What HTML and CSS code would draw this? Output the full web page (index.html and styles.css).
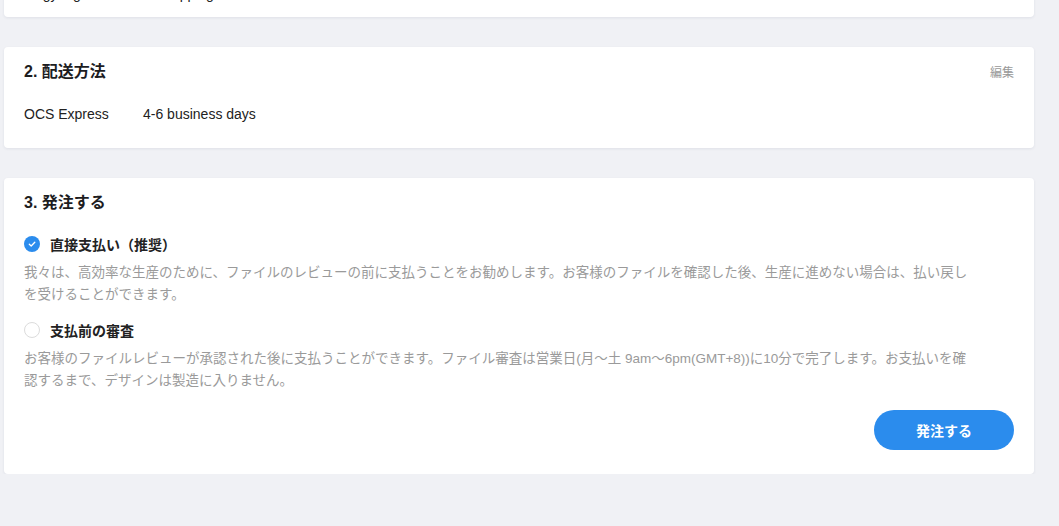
FILE: index.html
```html
<!DOCTYPE html>
<html lang="ja">
<head>
<meta charset="utf-8">
<title>発注</title>
<link rel="stylesheet" href="styles.css">
</head>
<body>
<div class="page">
  <section class="card card-prev">
    <div class="prev-line">Lingyang Zhou&nbsp;&nbsp;&nbsp;&nbsp;&nbsp;&nbsp;&nbsp;&nbsp;&nbsp;&nbsp;&nbsp;Shipping</div>
  </section>

  <section class="card">
    <header class="card-head">
      <h2 class="card-title">2. 配送方法</h2>
      <a class="edit-link">編集</a>
    </header>
    <div class="ship-row">
      <span class="ship-name">OCS Express</span>
      <span class="ship-time">4-6 business days</span>
    </div>
  </section>

  <section class="card">
    <header class="card-head">
      <h2 class="card-title">3. 発注する</h2>
    </header>
    <div class="options">
      <div class="option">
        <div class="option-label">
          <span class="radio radio-on">
            <svg viewBox="0 0 16 16" width="16" height="16"><circle cx="8" cy="8" r="8" fill="#2b8ced"/><path d="M5.3 8.2 L7.2 10 L10.8 6.3" fill="none" stroke="#fff" stroke-width="1.3" stroke-linecap="round" stroke-linejoin="round"/></svg>
          </span>
          <span class="option-name">直接支払い（推奨）</span>
        </div>
        <p class="option-desc">我々は、高効率な生産のために、ファイルのレビューの前に支払うことをお勧めします。お客様のファイルを確認した後、生産に進めない場合は、払い戻しを受けることができます。</p>
      </div>
      <div class="option">
        <div class="option-label">
          <span class="radio radio-off"></span>
          <span class="option-name">支払前の審査</span>
        </div>
        <p class="option-desc">お客様のファイルレビューが承認された後に支払うことができます。ファイル審査は営業日(月〜土 9am〜6pm(GMT+8))に10分で完了します。お支払いを確認するまで、デザインは製造に入りません。</p>
      </div>
    </div>
    <div class="actions">
      <button class="btn-primary" type="button">発注する</button>
    </div>
  </section>
</div>
</body>
</html>
```

FILE: styles.css
```css
* { box-sizing: border-box; }

html, body {
  margin: 0;
  padding: 0;
  background: #f0f1f5;
  overflow: hidden;
}

body {
  font-family: "Liberation Sans", "Noto Sans CJK JP", Arial, sans-serif;
  color: #222;
  font-size: 14px;
}

.page {
  width: 1030px;
  margin-left: 4px;
  display: flex;
  flex-direction: column;
  gap: 30px;
}

.card {
  background: #fff;
  border-radius: 4px;
  box-shadow: 0 1px 3px rgba(30, 40, 80, 0.08);
  padding: 0 20px 24px;
}

.card-prev {
  margin-top: -16px;
  padding: 0 20px 13px;
}

.prev-line {
  line-height: 20px;
  color: #222;
}

.card-head {
  height: 48px;
  display: flex;
  align-items: center;
  justify-content: space-between;
  padding-top: 1px;
}

.card-title {
  margin: 0;
  font-size: 16px;
  font-weight: 700;
  line-height: 24px;
  color: #1d1d1f;
}

.edit-link {
  font-size: 12px;
  color: #999;
  cursor: pointer;
}

.ship-row {
  margin-top: 9px;
  display: flex;
  line-height: 20px;
  font-size: 14px;
  color: #222;
}

.ship-name {
  width: 119px;
}

.options {
  margin-top: 8px;
  display: flex;
  flex-direction: column;
  gap: 14px;
}

.option-label {
  display: flex;
  align-items: center;
  gap: 10px;
  height: 20px;
}

.radio {
  width: 16px;
  height: 16px;
  display: inline-flex;
}

.radio svg { display: block; }

.radio-off {
  border: 1px solid #dcdcdc;
  border-radius: 50%;
  background: #fff;
}

.option-name {
  font-weight: 700;
  font-size: 14px;
  color: #222;
}

.option-desc {
  margin: 8px 0 0;
  font-size: 13.5px;
  line-height: 22px;
  color: #9a9a9a;
  padding-right: 40px;
}

.actions {
  margin-top: 18px;
  display: flex;
  justify-content: flex-end;
}

.btn-primary {
  width: 140px;
  height: 40px;
  border: none;
  border-radius: 20px;
  background: #2b8ced;
  color: #fff;
  font-family: "Noto Sans CJK JP", sans-serif;
  font-weight: 700;
  font-size: 14px;
  cursor: pointer;
}
```
